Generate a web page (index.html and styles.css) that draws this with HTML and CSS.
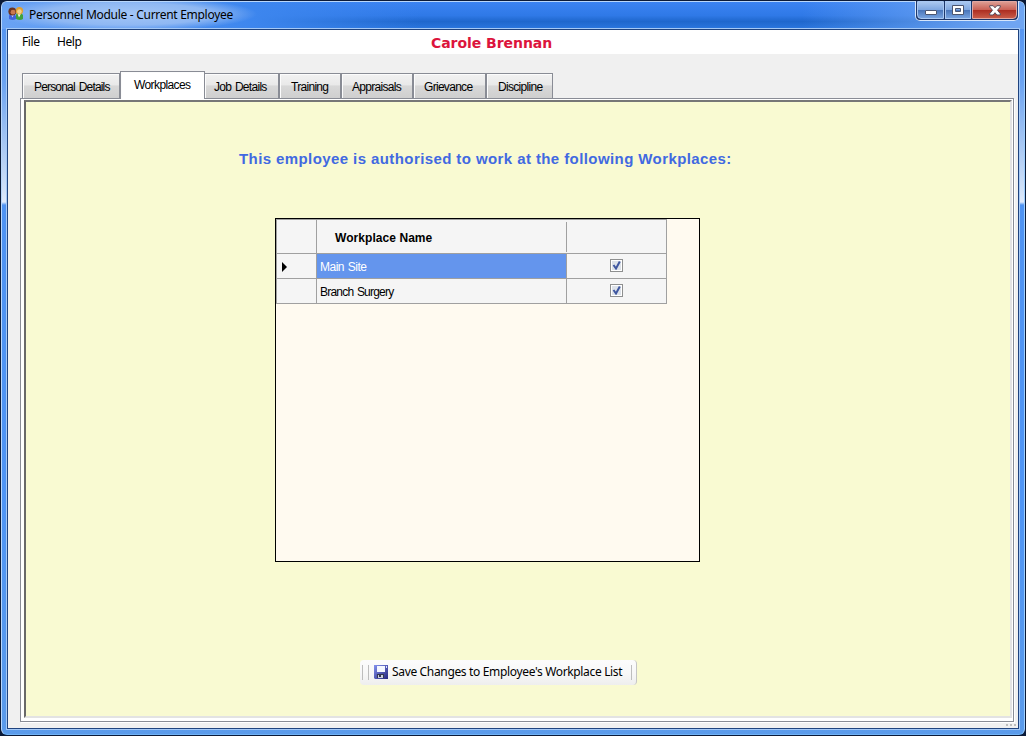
FILE: index.html
```html
<!DOCTYPE html>
<html lang="en">
<head>
<meta charset="utf-8">
<title>Personnel Module - Current Employee</title>
<link rel="stylesheet" href="styles.css">
</head>
<body>
<div class="window">
  <header class="titlebar">
    <svg class="app-icon" width="16" height="14" viewBox="0 0 16 14">
      <path d="M1 12V9q0-2 3-2t4 2v3q-3 2-7 0z" fill="#3f63dc"/>
      <path d="M8 12V8q0-2 3-2t4 2v4q-3 2-7 0z" fill="#3fa23c"/>
      <path d="M9.500 6.500l1.500 4 2-4z" fill="#f4f8ee"/><path d="M3 7.500l1.500 3 1.500-3z" fill="#c9d6ff"/>
      <circle cx="4.300" cy="4.500" r="3.900" fill="#6b3420"/><circle cx="5" cy="5.200" r="2.400" fill="#c9794f"/>
      <circle cx="11.400" cy="3.800" r="3.700" fill="#e0a030"/><circle cx="11.400" cy="4.600" r="2.300" fill="#f4cf86"/>
    </svg>
    <h1 class="title">Personnel Module - Current Employee</h1>
    <div class="controls">
      <div class="ctl ctl-min"><svg width="12" height="6"><rect x=".5" y=".5" width="11" height="4" rx=".5" fill="#fff" stroke="#4c5670"/></svg></div>
      <div class="ctl ctl-max"><svg width="12" height="10"><path d="M.5.5h11v9H.5zM3.500 3.500v3h5v-3z" fill="#fff" fill-rule="evenodd" stroke="#4c5670"/></svg></div>
      <div class="ctl ctl-close"><svg width="12" height="11" viewBox="0 0 12 11"><path d="M.7.7h3.500L6 2.800 7.800.7h3.500v1.300L8.500 5.200l2.800 3.500V10H7.800L6 7.700 4.200 10H.7V8.700l2.800-3.500L.7 2z" fill="#fff" stroke="#5a4a58"/></svg></div>
    </div>
  </header>
  <main class="client">
    <nav class="menu">
      <span class="menu-item file">File</span><span class="menu-item">Help</span>
      <strong class="employee">Carole Brennan</strong>
    </nav>
    <div class="tabs">
      <div class="tab t1">Personal Details</div>
      <div class="tab t2 selected">Workplaces</div>
      <div class="tab t3">Job Details</div>
      <div class="tab t4">Training</div>
      <div class="tab t5">Appraisals</div>
      <div class="tab t6">Grievance</div>
      <div class="tab t7">Discipline</div>
    </div>
    <section class="tabpage">
      <div class="page">
        <h2 class="heading">This employee is authorised to work at the following Workplaces:</h2>
        <div class="grid-frame">
          <div class="grid">
            <div class="cell corner"></div><div class="cell head">Workplace Name</div><div class="cell head-check"></div>
            <div class="cell row-head current"><svg width="5" height="10"><path d="M0 0l5 5-5 5z"/></svg></div><div class="cell name active">Main Site</div><div class="cell check"><span class="box"><svg width="9" height="9" viewBox="0 0 9 9"><path d="M1.500 4L4 7.500 7.800.5" fill="none" stroke="#3f57a0" stroke-width="2"/></svg></span></div>
            <div class="cell row-head"></div><div class="cell name">Branch Surgery</div><div class="cell check"><span class="box"><svg width="9" height="9" viewBox="0 0 9 9"><path d="M1.500 4L4 7.500 7.800.5" fill="none" stroke="#3f57a0" stroke-width="2"/></svg></span></div>
          </div>
        </div>
        <div class="toolbar">
          <i class="sep"></i><i class="sep second"></i>
          <svg class="disk" width="14" height="14" viewBox="0 0 14 14">
            <defs><linearGradient id="d" x2="1" y2="1"><stop stop-color="#8492ee"/><stop offset="1" stop-color="#25267e"/></linearGradient></defs>
            <path d="M0 0h14v14H1l-1-1z" fill="url(#d)"/><path d="M3 1h8v6H3z" fill="#f4f7ff"/><path d="M12 1h1v2h-1z" fill="#dce2ff"/>
            <path d="M3 9h7v4H3z" fill="#34374f"/><path d="M4 10h5v3H4z" fill="#c9cede"/><path d="M5 10h2v2H5z" fill="#33364c"/>
          </svg>
          <span class="save">Save Changes to Employee's Workplace List</span>
          <i class="sep last"></i>
        </div>
      </div>
    </section>
    <div class="grip"><i></i><i></i><i></i></div>
  </main>
</div>
</body>
</html>
```
FILE: styles.css
```css
* { box-sizing: border-box; }
body { margin: 0; width: 1026px; height: 736px; overflow: hidden; background: #0b1a38; font-family: "Liberation Sans", Arial, sans-serif; font-size: 12px; color: #000; }
.window { width: 1024px; height: 734px; margin: 1px 0 0 1px; border: 1px solid #b9d7fb; border-right-color: #9fd0ff; border-bottom-color: #6fb2f5; border-radius: 6px;
  background: linear-gradient(#4b8ef0 0, #6ba3f2 80px, #9cc0f2 130px, #d3e3f9 190px, #dfeafb 200px, #4f93f2 203px, #4f95f5 500px, #5b9bea 734px); }
.titlebar { height: 27px; display: flex; padding-left: 6px; border-radius: 5px 5px 0 0;
  background: radial-gradient(ellipse 130px 17px at 125px 12px, #a3c6f6 0, #8fb8f3 65%, transparent 100%), linear-gradient(90deg, #6aa3f4 0, #3d86ee 250px, #2573e400 420px, transparent 800px, #6fa5f2 1000px), linear-gradient(#3b83f2 0, #2f79e7 50%, #1f67cd 72%, #2b77e0 100%); }
.app-icon { margin-top: 5px; }
.title { margin: 0 0 0 5px; padding-top: 4px; flex: 1; font: 12px/18px "Noto Sans", sans-serif; letter-spacing: -.29px; white-space: nowrap; }
.controls { display: flex; width: 104px; height: 20px; margin: -1px 5px 0 0; border: 1px solid #d6e6fb; border-top: 0; border-radius: 0 0 5px 5px; background: #1d376b; padding: 0 1px 1px; gap: 1px; overflow: hidden; }
.ctl { display: flex; align-items: center; justify-content: center; border: 1px solid #a9c8f2; background: linear-gradient(#a9c7ef 0, #7fa7e0 48%, #4874b9 50%, #76a2df 100%); }
.ctl-min { width: 27px; padding-top: 5px; border-bottom-left-radius: 4px; } .ctl-max { width: 26px; }
.ctl-close { flex: 1; border-color: #e1a7a1; border-bottom-right-radius: 4px; background: linear-gradient(#dc9b91 0, #ca6256 48%, #ac2c20 50%, #c85b48 100%); }
.client { display: flex; flex-direction: column; width: 1012px; height: 700px; margin-left: 5px; border: 1px solid #1f437e; outline: 1px solid #a5c9f6; background: #f0f0f0; }
.menu { display: flex; height: 24px; background: #fff; font: 12px/24px "Noto Sans", sans-serif; letter-spacing: -.4px; }
.menu-item { width: 35px; } .file { margin-left: 14px; }
.employee { margin-left: 339px; font: bold 14px/26px "DejaVu Sans", sans-serif; letter-spacing: -.05px; color: #dc143c; }
.tabs { display: flex; align-items: flex-end; height: 44px; padding-left: 14px; letter-spacing: -.7px; }
.tab { height: 25px; border: 1px solid #898c95; border-bottom: 0; box-shadow: inset 1px 1px #fcfcfc; padding-left: 11px; line-height: 26px; white-space: nowrap; background: linear-gradient(#f2f2f2, #e9e9e9 45%, #d8d8d8 50%, #cfcfcf); }
.t1 { width: 98px; letter-spacing: -.83px; word-spacing: 1.500px; } .t2 { width: 85px; letter-spacing: -.6px; } .t3 { width: 74px; border-left: 0; padding-left: 9px; word-spacing: 1px; } .t4 { width: 62px; }
.t5 { width: 72px; padding-left: 10px; } .t6 { width: 73px; padding-left: 10px; } .t7 { width: 67px; }
.selected { height: 28px; margin-bottom: -1px; padding-left: 13px; background: #fff; z-index: 1; }
.tabpage { width: 994px; height: 624px; margin-left: 12px; padding: 1px 1px 3px 3px; border: 1px solid #898c95; background: #fff; box-shadow: 1px 1px #fff; }
.page { display: flex; flex-direction: column; height: 618px; border: 2px solid #696969; border-top-color: #777; border-right-color: #e3e3e3; border-bottom-color: #e3e3e3; background: #f9fad2; }
.heading { margin: 47px 0 0 213px; font-size: 15px; line-height: 20px; letter-spacing: .41px; color: #4169e1; white-space: nowrap; }
.grid-frame { width: 425px; height: 344px; margin: 49px 0 0 249px; border: 1px solid #000; background: #fffaf0; }
.grid { display: grid; grid-template: 34px 25px 25px / 41px 250px 100px; width: 391px; border-top: 1px solid #a0a0a0; }
.cell { border-right: 1px solid #a0a0a0; border-bottom: 1px solid #a0a0a0; background: #f5f5f5; display: flex; align-items: center; }
.corner, .row-head { border-left: 1px solid #a0a0a0; }
.head { padding-left: 18px; font-weight: bold; padding-top: 2px; letter-spacing: .06px; border-right: 0; background: linear-gradient(#a0a0a0, #a0a0a0) right 2px / 1px 30px no-repeat #f5f5f5; }
.row-head { padding-left: 5px; }
.current { padding-top: 1px; }
.name { padding-left: 3px; padding-top: 2px; letter-spacing: -.78px; word-spacing: 1px; }
.active { background: #6495ed; color: #fff; letter-spacing: -.5px; }
.check { justify-content: center; padding-bottom: 1px; }
.box { display: flex; align-items: center; justify-content: center; width: 13px; height: 13px; border: 1px solid #8e8f8f; background: #dde2e9; box-shadow: inset 0 0 0 1px #fff; }
.toolbar { display: flex; align-items: center; width: 277px; height: 25px; margin: 98px 0 0 334px; border-radius: 4px; background: linear-gradient(#fcfcfc, #f8f8f8 50%, #eee); border-right: 1px solid #c5c5c5; }
.sep { width: 1px; height: 15px; margin-left: 2px; background: #bdbdbd; } .second { margin-left: 5px; }
.disk { margin-left: 5px; margin-bottom: 1px; }
.save { margin-left: 4px; margin-bottom: 1px; width: 231px; font: 12px/22px "Noto Sans", sans-serif; letter-spacing: -.34px; white-space: nowrap; }
.last { margin-left: 8px; }
.grip { display: flex; gap: 2px; justify-content: flex-end; padding: 2px 2px 0 0; }
.grip i { width: 2px; height: 2px; background: #bdbdbd; }
```
